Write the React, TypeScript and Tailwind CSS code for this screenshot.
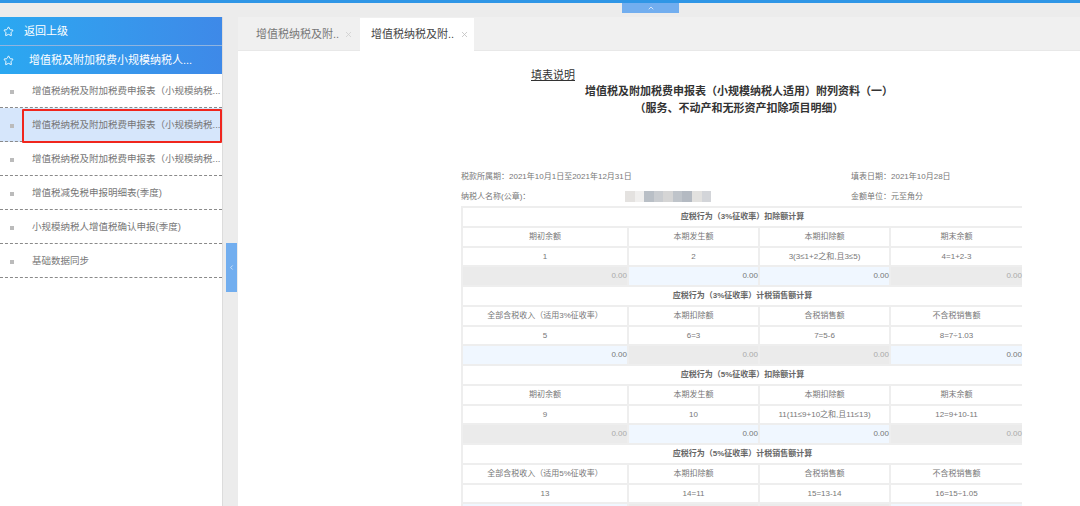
import { ChevronLeft, ChevronUp, Star, X } from "lucide-react";

const menuItems = [
  "增值税纳税及附加税费申报表（小规模纳税...",
  "增值税纳税及附加税费申报表（小规模纳税...",
  "增值税纳税及附加税费申报表（小规模纳税...",
  "增值税减免税申报明细表(季度)",
  "小规模纳税人增值税确认申报(季度)",
  "基础数据同步",
];

const sections = [
  {
    title: "应税行为（3%征收率）扣除额计算",
    heads: ["期初余额", "本期发生额", "本期扣除额", "期末余额"],
    nums: ["1", "2", "3(3≤1+2之和,且3≤5)", "4=1+2-3"],
    locked: [true, false, false, true],
  },
  {
    title: "应税行为（3%征收率）计税销售额计算",
    heads: ["全部含税收入（适用3%征收率）", "本期扣除额", "含税销售额", "不含税销售额"],
    nums: ["5", "6=3", "7=5-6", "8=7÷1.03"],
    locked: [false, true, true, false],
  },
  {
    title: "应税行为（5%征收率）扣除额计算",
    heads: ["期初余额", "本期发生额", "本期扣除额", "期末余额"],
    nums: ["9", "10", "11(11≤9+10之和,且11≤13)", "12=9+10-11"],
    locked: [true, false, false, true],
  },
  {
    title: "应税行为（5%征收率）计税销售额计算",
    heads: ["全部含税收入（适用5%征收率）", "本期扣除额", "含税销售额", "不含税销售额"],
    nums: ["13", "14=11", "15=13-14", "16=15÷1.05"],
    locked: [false, true, true, false],
  },
];

const mosaic = ["#e4e2e0", "#f0efee", "#b9bfc6", "#c9ccd0", "#d5d5d5", "#bfc4ca", "#b4bac2", "#e2e1df", "#d3d5d9"];

function Cell({ last, children }: { last: boolean; children: React.ReactNode }) {
  return (
    <div
      className={`flex items-center justify-center border-b-2 border-[#eeeeee] pt-[1px] text-[8px] whitespace-nowrap text-[#777777] ${
        last ? "" : "border-r-2"
      }`}
    >
      {children}
    </div>
  );
}

export default function App() {
  return (
    <div className="h-[506px] w-[1080px] overflow-hidden bg-[#ececec] font-['Liberation_Sans','Noto_Sans_CJK_SC',sans-serif]">
      <div className="h-[3px] bg-[#2f96e6]" />
      <div className="flex h-[14px] justify-center pl-[221px]">
        <div className="flex h-[10px] w-[57px] items-center justify-center bg-[#72aeef] text-white">
          <ChevronUp size={8} />
        </div>
      </div>

      <div className="flex h-[489px]">
        {/* Sidebar */}
        <aside className="h-full w-[223px] shrink-0 border-r border-[#dcdcdc] bg-white">
          <div className="flex h-[29px] items-center border-b border-[#8fb4e0] bg-gradient-to-r from-[#2aa8f1] to-[#3e89e8] text-[11px] text-white">
            <Star size={11} className="mr-[10px] ml-[3px]" />
            <span>返回上级</span>
          </div>
          <div className="flex h-[28px] items-center bg-gradient-to-r from-[#2aa8f1] to-[#3e89e8] text-[11px] text-white">
            <Star size={11} className="mr-[15px] ml-[3px]" />
            <span>增值税及附加税费小规模纳税人...</span>
          </div>
          {menuItems.map((item, idx) => (
            <div
              key={idx}
              className={`relative flex h-[34px] items-center border-b border-dashed border-[#8a8a8a] pt-[2px] text-[9.5px] whitespace-nowrap text-[#777777] ${
                idx === 1 ? "bg-[#d6e6fb]" : ""
              }`}
            >
              <span className="mr-[18px] ml-[10px] size-[4px] shrink-0 bg-[#bbbbbb]" />
              <span>{item}</span>
              {idx === 1 && (
                <div className="absolute top-[1px] left-[22px] h-[34px] w-[200px] rounded-[1px] border-[2px] border-[#f0261d]" />
              )}
            </div>
          ))}
        </aside>

        {/* Splitter */}
        <div className="flex h-full w-[15px] shrink-0 items-start pt-[226px] pl-[3px]">
          <div className="flex h-[49px] w-[11px] items-center justify-center bg-[#72aeef] text-white">
            <ChevronLeft size={7} />
          </div>
        </div>

        {/* Main */}
        <main className="h-full min-w-0 flex-1 bg-white">
          <div className="flex h-[34px] border-b border-[#e8e8e8] bg-[#f0f0f0] pt-[1px] text-[11px]">
            <div className="flex w-[122px] items-center pl-[18px] text-[#777777]">
              <span>增值税纳税及附..</span>
              <X size={9} className="ml-[5px] text-[#cccccc]" />
            </div>
            <div className="flex h-[33px] w-[114px] items-center bg-white pl-[11px] text-[#444444]">
              <span>增值税纳税及附..</span>
              <X size={9} className="ml-[6px] text-[#bbbbbb]" />
            </div>
          </div>

          <div className="ml-[223px] w-[561px]">
            <div className="mt-[17px] ml-[70px] text-[11px] leading-[14px] text-[#333333] underline">填表说明</div>
            <div className="mt-[1px] pr-[5px] text-center text-[11px] leading-[17px] font-bold text-[#333333]">
              <div>增值税及附加税费申报表（小规模纳税人适用）附列资料（一）</div>
              <div>（服务、不动产和无形资产扣除项目明细）</div>
            </div>

            <div className="mt-[50px] flex h-[20px] items-center text-[8px] text-[#777777]">
              <span className="w-[390px]">税款所属期：2021年10月1日至2021年12月31日</span>
              <span>填表日期：2021年10月28日</span>
            </div>
            <div className="flex h-[19px] items-center text-[8px] text-[#777777]">
              <span className="w-[164px]">纳税人名称(公章)：</span>
              <div className="flex h-[11px] w-[86px] shrink-0">
                {mosaic.map((color) => (
                  <span key={color} className="h-full flex-1" style={{ backgroundColor: color }} />
                ))}
              </div>
              <span className="ml-[140px]">金额单位：元至角分</span>
            </div>

            <div className="grid auto-rows-[19.75px] grid-cols-[166px_131px_131px_131px] border-t-2 border-l-2 border-[#eeeeee]">
              {sections.map((section) => (
                <div key={section.title} className="contents">
                  <div className="col-span-4 flex items-center justify-center border-b-2 border-[#eeeeee] pt-[1px] text-[8px] font-bold text-[#666666]">
                    {section.title}
                  </div>
                  {section.heads.map((head, i) => (
                    <Cell key={i} last={i === 3}>
                      {head}
                    </Cell>
                  ))}
                  {section.nums.map((num, i) => (
                    <Cell key={i} last={i === 3}>
                      {num}
                    </Cell>
                  ))}
                  {section.locked.map((locked, i) => (
                    <div
                      key={i}
                      className={`flex items-center justify-end border-b-2 border-[#eeeeee] text-[8px] ${
                        i === 3 ? "" : "border-r-2"
                      } ${locked ? "bg-[#ebebeb] text-[#aaaaaa]" : "bg-[#f0f7ff] text-[#777777]"}`}
                    >
                      0.00
                    </div>
                  ))}
                </div>
              ))}
            </div>
          </div>
        </main>
      </div>
    </div>
  );
}
